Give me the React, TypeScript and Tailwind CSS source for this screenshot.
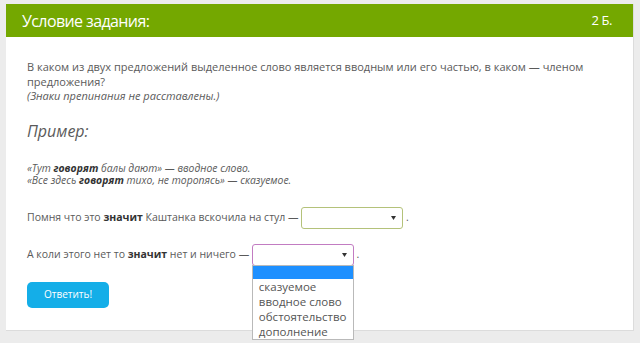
const font = { fontFamily: '"Open Sans", "Noto Sans", sans-serif' };

function Select({ border, open }: { border: string; open?: boolean }) {
  return (
    <span className="relative inline-block align-middle">
      <span
        className={`flex h-[22px] w-[102px] items-center justify-end rounded-[3px] border bg-white pr-[6px] ${border}`}
      >
        <svg width="5" height="4" viewBox="0 0 5 4">
          <path d="M0 0h5L2.5 4z" fill="#333" />
        </svg>
      </span>
      {open && (
        <span className="absolute left-0 top-[21px] z-10 flex w-[102px] flex-col whitespace-nowrap border border-[#b9b9b9] bg-white text-[11.5px] leading-[15px] text-[#555]">
          <span className="h-[13px] bg-[#1e90ff]" />
          <span className="px-[6px]">сказуемое</span>
          <span className="px-[6px]">вводное слово</span>
          <span className="px-[6px]">обстоятельство</span>
          <span className="px-[6px]">дополнение</span>
        </span>
      )}
    </span>
  );
}

export default function App() {
  return (
    <div className="h-[343px] w-[640px] overflow-hidden bg-[#ececec] pl-[6px] pt-[4px]" style={font}>
      <div className="w-[628px] border-b border-r border-[#dcdcdc] bg-white">
        <div className="flex h-[33px] items-center justify-between bg-[#74a800] pl-[16px] pr-[21px] text-white">
          <span className="text-[16px] tracking-[-0.6px]">Условие задания:</span>
          <span className="text-[13px] tracking-[-0.4px]">2 Б.</span>
        </div>
        <div className="px-[21px] pb-[22px] pt-[23px] text-[#5a5a5a]">
          <p className="text-[11px] leading-[14.5px]">
            В каком из двух предложений выделенное слово является вводным или его частью, в каком — членом
            предложения?
            <br />
            <i>(Знаки препинания не расставлены.)</i>
          </p>
          <p className="mt-[17px] text-[16px] italic leading-[20px]">Пример:</p>
          <p className="mt-[21px] text-[10.4px] italic leading-[12.5px]">
            «Тут <b className="text-[#333]">говорят</b> балы дают» — вводное слово.
            <br />
            «Все здесь <b className="text-[#333]">говорят</b> тихо, не торопясь» — сказуемое.
          </p>
          <div className="mt-[20px] flex h-[22px] items-center text-[10.5px]">
            <span>
              Помня что это <b className="text-[#333]">значит</b> Каштанка вскочила на стул —&nbsp;
            </span>
            <Select border="border-[#b4c27a]" />
            <span>&nbsp;.</span>
          </div>
          <div className="mt-[15px] flex h-[22px] items-center text-[10.5px]">
            <span>
              А коли этого нет то <b className="text-[#333]">значит</b> нет и ничего —&nbsp;
            </span>
            <Select border="border-[#c27cc2]" open />
            <span>&nbsp;.</span>
          </div>
          <button className="mt-[16px] h-[26px] w-[82px] rounded-[5px] bg-[#14aee8] text-[10px] text-white">
            Ответить!
          </button>
        </div>
      </div>
    </div>
  );
}
